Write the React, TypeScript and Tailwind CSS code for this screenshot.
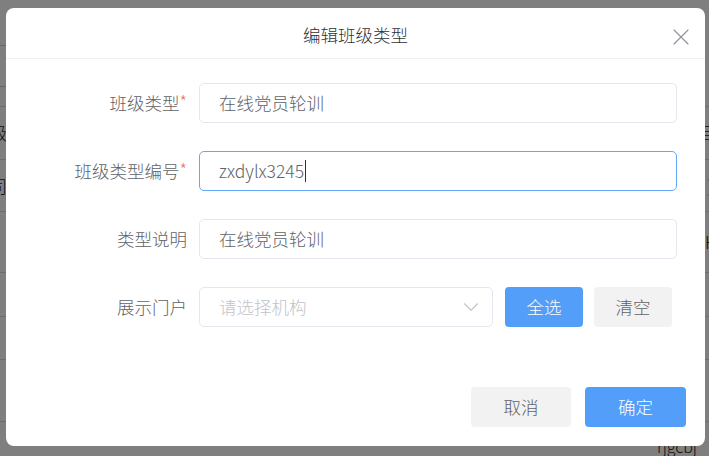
import { X, ChevronDown } from 'lucide-react'

const font = { fontFamily: '"Noto Sans CJK SC", "Liberation Sans", sans-serif' }

function Field({ label, required, children }: { label: string; required?: boolean; children: React.ReactNode }) {
  return (
    <div className="flex items-center h-[40px]">
      <div className="w-[193px] pr-[12px] text-right text-[17.5px] text-[#606266] leading-none">
        {label}
        {required && <span className="text-[#f56c6c] text-[17px] relative top-[-2px]">*</span>}
      </div>
      {children}
    </div>
  )
}

export default function App() {
  return (
    <div className="relative w-[709px] h-[456px] overflow-hidden bg-white font-light" style={font}>
      {/* 뒤쪽 페이지 */}
      <div className="flex flex-col text-[17px] text-[#222]">
        <div className="h-[45px]" />
        <div className="h-[42px] w-[40px] ml-[-20px] border border-[#ccc] rounded-md" />
        <div className="h-[20px] border-b border-[#ddd]" />
        <div className="h-[53px] flex items-center justify-between px-0 border-b border-[#ddd]">
          <span className="ml-[-10px]">级</span>
          <span className="mr-[-6px]">目</span>
        </div>
        <div className="h-[52px] flex items-center justify-between border-b border-[#ddd]">
          <span className="ml-[-10px]">司</span>
          <span className="mr-[-4px]">)</span>
        </div>
        <div className="h-[61px] flex items-center justify-end border-b border-[#ddd]">
          <span className="mr-[-8px]">H</span>
        </div>
        <div className="h-[44px] border-b border-[#ddd]" />
        <div className="h-[43px] border-b border-[#ddd]" />
        <div className="h-[62px] border-b border-[#ddd]" />
        <div className="flex justify-end pr-[12px] pt-[12px]">
          <span className="text-[16px]">rjgcbj</span>
        </div>
      </div>

      <div className="absolute inset-0 bg-black/50" />

      {/* 편집 다이얼로그 */}
      <div className="absolute left-[6px] top-[8px] w-[699px] h-[438px] bg-white rounded-[8px] flex flex-col">
        <div className="relative h-[51px] border-b border-[#f0f0f0] flex items-center justify-center">
          <span className="text-[17.5px] text-[#303133] leading-none mt-[3px]">编辑班级类型</span>
          <X className="absolute right-[10px] top-[15px] w-[28px] h-[28px] text-[#909399]" strokeWidth={1} />
        </div>

        <div className="flex flex-col gap-[28px] pt-[24px]">
          <Field label="班级类型" required>
            <div className="w-[478px] h-[40px] border border-[#e4e7ed] rounded-[5px] flex items-center pl-[19px] text-[17.5px] text-[#606266]">
              在线党员轮训
            </div>
          </Field>
          <Field label="班级类型编号" required>
            <div className="w-[478px] h-[40px] border border-[#62a8fa] rounded-[5px] flex items-center pl-[19px] text-[17.5px] text-[#606266]">
              zxdylx3245
              <span className="inline-block w-[1px] h-[22px] bg-[#303133] ml-[1px]" />
            </div>
          </Field>
          <Field label="类型说明">
            <div className="w-[478px] h-[40px] border border-[#e4e7ed] rounded-[5px] flex items-center pl-[19px] text-[17.5px] text-[#606266]">
              在线党员轮训
            </div>
          </Field>
          <div className="flex items-center h-[40px]">
            <div className="w-[193px] pr-[12px] text-right text-[17.5px] text-[#606266] leading-none">展示门户</div>
            <div className="w-[294px] h-[40px] border border-[#e4e7ed] rounded-[5px] flex items-center justify-between pl-[19px] pr-[8px] text-[17.5px] text-[#c0c4cc]">
              请选择机构
              <ChevronDown className="w-[26px] h-[26px] text-[#c0c4cc]" strokeWidth={1} />
            </div>
            <button className="ml-[12px] w-[78px] h-[40px] rounded-[4px] bg-[#529ef8] text-white text-[17.5px]">全选</button>
            <button className="ml-[11px] w-[78px] h-[40px] rounded-[4px] bg-[#f2f2f2] text-[#606266] text-[17.5px]">清空</button>
          </div>
        </div>

        <div className="mt-auto flex justify-end gap-[14px] pr-[19px] pb-[19px]">
          <button className="w-[100px] h-[40px] rounded-[4px] bg-[#f2f2f2] text-[#606266] text-[17.5px]">取消</button>
          <button className="w-[101px] h-[40px] rounded-[4px] bg-[#529ef8] text-white text-[17.5px]">确定</button>
        </div>
      </div>
    </div>
  )
}
